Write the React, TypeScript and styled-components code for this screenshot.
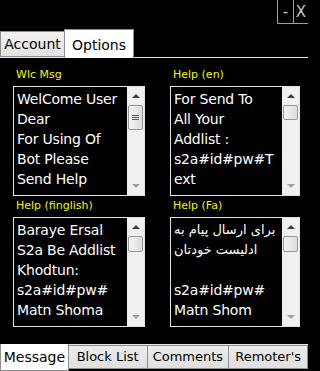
import React from 'react';
import styled, { createGlobalStyle } from 'styled-components';

const GlobalStyle = createGlobalStyle`
  html, body { margin: 0; padding: 0; background: #000; }
  * { box-sizing: border-box; }
`;

interface BoxProps {
  label: string;
  lines: string[];
  thumb: number;
  grip?: boolean;
}

const Window = styled.div`
  width: 308px;
  height: 371px;
  background: #000;
  display: flex;
  flex-direction: column;
  font-family: "DejaVu Sans", sans-serif;
  overflow: hidden;
`;

const TitleRow = styled.div`
  height: 29px;
  display: flex;
  justify-content: flex-end;
  align-items: flex-start;
`;

const WinButton = styled.div`
  width: 15px;
  height: 24px;
  border-left: 1px solid #a0a0a0;
  border-bottom: 1px solid #a0a0a0;
  color: #c8c8c8;
  font-size: 15px;
  display: flex;
  align-items: center;
  justify-content: center;
  &:first-child { width: 16px; }
`;

const TopStrip = styled.div`
  height: 29px;
  display: flex;
  align-items: flex-end;
  border-bottom: 1px solid #e8e8e8;
`;

const Tab = styled.div<{ $active?: boolean; $w: number }>`
  width: ${p => p.$w}px;
  height: ${p => (p.$active ? 29 : 26)}px;
  margin-bottom: ${p => (p.$active ? -1 : 0)}px;
  background: ${p => (p.$active ? '#fff' : 'linear-gradient(#f2f2f2, #e2e2e2)')};
  border: 1px solid #8d8d8d;
  border-bottom: ${p => (p.$active ? 'none' : '1px solid #8d8d8d')};
  color: #000;
  font-size: 14px;
  display: flex;
  align-items: center;
  justify-content: center;
  padding-top: ${p => (p.$active ? 2 : 0)}px;
  & + & { margin-left: -1px; }
`;

const Panel = styled.div`
  flex: 1;
  padding: 11px 0 0 13px;
  display: grid;
  grid-template-columns: 132px 130px;
  grid-auto-rows: min-content;
  column-gap: 25px;
  row-gap: 4px;
`;

const Group = styled.div`
  display: flex;
  flex-direction: column;
`;

const Label = styled.div`
  height: 17px;
  color: #f4f400;
  font-size: 11px;
  padding-left: 3px;
  line-height: 12px;
`;

const Box = styled.div`
  height: 110px;
  border: 1px solid #e4e4e4;
  display: flex;
  background: #000;
`;

const Text = styled.div`
  flex: 1;
  color: #fff;
  font-size: 14px;
  line-height: 20px;
  padding: 2px 0 0 3px;
  white-space: nowrap;
  overflow: hidden;
  letter-spacing: -0.2px;
`;

const Line = styled.div`
  height: 20px;
  &:lang(fa) {
    font-size: 13px;
    letter-spacing: 0;
    unicode-bidi: plaintext;
    text-align: left;
  }
`;

const Scroll = styled.div`
  width: 17px;
  background: #f0f0f0;
  display: flex;
  flex-direction: column;
  align-items: center;
`;

const Arrow = styled.div`
  height: 17px;
  width: 17px;
  display: flex;
  align-items: center;
  justify-content: center;
`;

const Thumb = styled.div<{ $h: number }>`
  width: 15px;
  height: ${p => p.$h}px;
  margin-top: 1px;
  border: 1px solid #979797;
  border-radius: 2px;
  background: linear-gradient(90deg, #f4f4f4, #e6e6e6 60%, #dcdcdc);
  display: flex;
  align-items: center;
  justify-content: center;
`;

const Spacer = styled.div`
  flex: 1;
`;

const BottomStrip = styled.div`
  height: 27px;
  display: flex;
  align-items: flex-start;
  border-top: 1px solid #e8e8e8;
`;

const BottomTab = styled.div<{ $active?: boolean; $w: number; $comic?: boolean }>`
  width: ${p => p.$w}px;
  height: ${p => (p.$active ? 27 : 24)}px;
  margin-top: ${p => (p.$active ? -1 : 0)}px;
  background: ${p => (p.$active ? '#fff' : 'linear-gradient(#ececec, #e0e0e0)')};
  border: 1px solid #8d8d8d;
  border-top: ${p => (p.$active ? 'none' : '1px solid #8d8d8d')};
  font-size: ${p => (p.$comic ? 14 : 13)}px;
  color: #000;
  display: flex;
  align-items: center;
  justify-content: center;
  padding-bottom: ${p => (p.$active ? 0 : 2)}px;
  & + & { margin-left: -1px; }
`;

const UpIcon = ({ color }: { color: string }) => (
  <svg width="8" height="5" viewBox="0 0 8 5"><path d="M0 5 L4 1 L8 5 Z" fill={color} /></svg>
);

const DownIcon = ({ color }: { color: string }) => (
  <svg width="8" height="5" viewBox="0 0 8 5"><path d="M0 0 L4 4 L8 0 Z" fill={color} /></svg>
);

const GripIcon = () => (
  <svg width="7" height="6" viewBox="0 0 7 6">
    <path d="M0 0.5 H7 M0 2.5 H7 M0 4.5 H7" stroke="#5a5a5a" strokeWidth="1" />
  </svg>
);

const TextBox = ({ label, lines, thumb, grip }: BoxProps) => (
  <Group>
    <Label>{label}</Label>
    <Box>
      <Text>
        {lines.map((l, i) => (
          <Line key={i} lang={/[\u0600-\u06ff]/.test(l) ? 'fa' : 'en'}>{l || '\u00a0'}</Line>
        ))}
      </Text>
      <Scroll>
        <Arrow><UpIcon color="#404040" /></Arrow>
        <Thumb $h={thumb}>{grip && <GripIcon />}</Thumb>
        <Spacer />
        <Arrow><DownIcon color="#a0a0a0" /></Arrow>
      </Scroll>
    </Box>
  </Group>
);

const boxes: BoxProps[] = [
  { label: 'Wlc Msg', lines: ['WelCome User', 'Dear', 'For Using Of', 'Bot Please', 'Send Help'], thumb: 25, grip: true },
  { label: 'Help (en)', lines: ['For Send To', 'All Your', 'Addlist :', 's2a#id#pw#T', 'ext'], thumb: 15 },
  { label: 'Help (finglish)', lines: ['Baraye Ersal', 'S2a Be Addlist', 'Khodtun:', 's2a#id#pw#', 'Matn Shoma'], thumb: 16 },
  { label: 'Help (Fa)', lines: ['برای ارسال پیام به', 'ادلیست خودتان', '', 's2a#id#pw#', 'Matn Shom'], thumb: 16 },
];

export default function App() {
  return (
    <>
      <GlobalStyle />
      <Window>
        <TitleRow>
          <WinButton>-</WinButton>
          <WinButton>X</WinButton>
        </TitleRow>
        <TopStrip>
          <Tab $w={65}>Account</Tab>
          <Tab $w={70} $active>Options</Tab>
        </TopStrip>
        <Panel>
          {boxes.map(b => (
            <TextBox key={b.label} {...b} />
          ))}
        </Panel>
        <BottomStrip>
          <BottomTab $w={69} $active $comic>Message</BottomTab>
          <BottomTab $w={80}>Block List</BottomTab>
          <BottomTab $w={83}>Comments</BottomTab>
          <BottomTab $w={80}>Remoter's</BottomTab>
        </BottomStrip>
      </Window>
    </>
  );
}
